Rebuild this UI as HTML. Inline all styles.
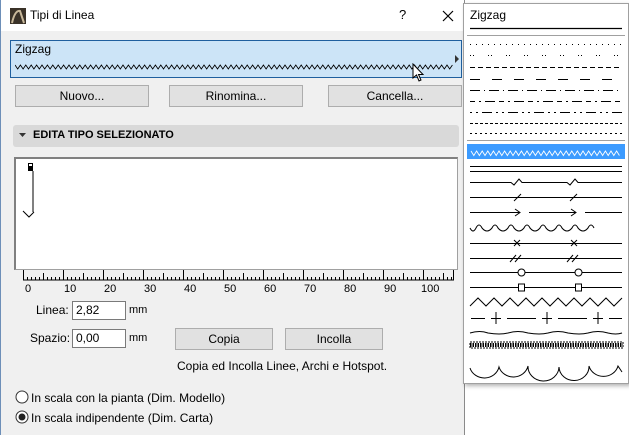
<!DOCTYPE html>
<html><head><meta charset="utf-8"><style>
body{margin:0;width:629px;height:435px;background:#fff;position:relative;overflow:hidden;font-family:"Liberation Sans",sans-serif;font-size:12px;color:#000}
.a{position:absolute}
.btn{position:absolute;background:#e1e1e1;border:1px solid #adadad;box-sizing:border-box;text-align:center;line-height:20px;font-size:12px}
.inp{position:absolute;background:#fff;border:1px solid #7a7a7a;box-sizing:border-box;padding-left:3px;line-height:16px}
</style></head><body>
<div class="a" style="left:0;top:0;width:465px;height:435px;background:#f0f0f0;border-left:1px solid #6d8fb8;border-right:1px solid #8a8a8a;box-sizing:border-box"></div>
<div class="a" style="left:1px;top:0;width:463px;height:31px;background:#fff"></div>
<svg class="a" style="left:10px;top:8px" width="16" height="16"><rect width="16" height="16" fill="#3a3228"/><path d="M2 15 Q5 2 10 3 L14 15" stroke="#c8b89a" stroke-width="2" fill="none"/></svg>
<div class="a" style="left:30px;top:8px;font-size:12px">Tipi di Linea</div>
<div class="a" style="left:399px;top:7px;font-size:13px">?</div>
<svg class="a" style="left:442px;top:10px" width="12" height="12"><path d="M1 1L11 11M11 1L1 11" stroke="#000" stroke-width="1.2"/></svg>
<div class="a" style="left:10px;top:40px;width:452px;height:38px;background:#cce4f7;border:1px solid #1f5f9e;box-sizing:border-box"></div>
<div class="a" style="left:15px;top:42px">Zigzag</div>
<svg class="a" style="left:15px;top:63px" width="440" height="8"><polyline id="zz1" fill="none" stroke="#000" stroke-width="0.9" points=""/></svg>
<svg class="a" style="left:455px;top:55px" width="5" height="8"><path d="M0 0L4 4L0 8Z" fill="#333"/></svg>
<svg class="a" style="left:412px;top:63px" width="14" height="20"><path d="M1 1L1 15L4.5 12L7 18L9 17L6.5 11.5L11 11.5Z" fill="#fff" stroke="#000" stroke-width="1"/></svg>
<div class="btn" style="left:15px;top:85px;width:134px;height:22px">Nuovo...</div>
<div class="btn" style="left:169px;top:85px;width:134px;height:22px">Rinomina...</div>
<div class="btn" style="left:328px;top:85px;width:134px;height:22px">Cancella...</div>
<div class="a" style="left:13px;top:125px;width:446px;height:22px;background:#d9d9d9;border-radius:3px"></div>
<svg class="a" style="left:19px;top:133px" width="8" height="5"><path d="M0 0H7L3.5 4Z" fill="#333"/></svg>
<div class="a" style="left:33px;top:129px;font-weight:bold;font-size:11px">EDITA TIPO SELEZIONATO</div>
<div class="a" style="left:14px;top:157px;width:444px;height:113px;background:#fff;border:1px solid #a0a0a0;border-top:2px solid #808080;border-left:2px solid #808080;box-sizing:border-box"></div>
<svg class="a" style="left:20px;top:160px" width="20" height="65"><rect x="8.5" y="3.5" width="4" height="3" fill="none" stroke="#000"/><rect x="8" y="7" width="5" height="4" fill="#000"/><line x1="13" y1="11" x2="13" y2="52" stroke="#000"/><path d="M3 51L9 57L14 52" stroke="#000" fill="none"/></svg>
<svg class="a" style="left:20px;top:267px" width="440" height="14">
<g stroke="#000" stroke-width="1">
<line x1="3" y1="13" x2="434" y2="13"/>
<path id="tk" d="M3.5 3V13M7.5 10V13M11.5 10V13M15.5 10V13M19.5 10V13M23.5 6V13M27.5 10V13M31.5 10V13M35.5 10V13M39.5 10V13"/>
<use href="#tk" x="40"/><use href="#tk" x="80"/><use href="#tk" x="120"/><use href="#tk" x="160"/><use href="#tk" x="200"/><use href="#tk" x="240"/><use href="#tk" x="280"/><use href="#tk" x="320"/><use href="#tk" x="360"/>
<path d="M403.5 3V13M407.5 10V13M411.5 10V13M415.5 10V13M419.5 10V13M423.5 6V13M427.5 10V13M431.5 10V13M433.5 3V13"/>
</g></svg>
<div class="a" style="top:283px;left:0;width:465px;font-size:11px">
<span class="a" style="left:25px">0</span><span class="a" style="left:64px">10</span><span class="a" style="left:104px">20</span><span class="a" style="left:144px">30</span><span class="a" style="left:184px">40</span><span class="a" style="left:224px">50</span><span class="a" style="left:264px">60</span><span class="a" style="left:304px">70</span><span class="a" style="left:344px">80</span><span class="a" style="left:384px">90</span><span class="a" style="left:421px">100</span></div>
<div class="a" style="left:36px;top:303px">Linea:</div>
<div class="inp" style="left:72px;top:301px;width:54px;height:19px">2,82</div>
<div class="a" style="left:129px;top:304px;font-size:11px">mm</div>
<div class="a" style="left:30px;top:331px">Spazio:</div>
<div class="inp" style="left:72px;top:329px;width:54px;height:19px">0,00</div>
<div class="a" style="left:129px;top:332px;font-size:11px">mm</div>
<div class="btn" style="left:175px;top:328px;width:98px;height:22px">Copia</div>
<div class="btn" style="left:285px;top:328px;width:98px;height:22px">Incolla</div>
<div class="a" style="left:177px;top:359px">Copia ed Incolla Linee, Archi e Hotspot.</div>
<svg class="a" style="left:15px;top:390px" width="14" height="34"><circle cx="7" cy="7" r="6" fill="#fff" stroke="#333"/><circle cx="7" cy="27" r="6" fill="#fff" stroke="#333"/><circle cx="7" cy="27" r="3.5" fill="#222"/></svg>
<div class="a" style="left:31px;top:391px">In scala con la pianta (Dim. Modello)</div>
<div class="a" style="left:31px;top:411px">In scala indipendente (Dim. Carta)</div>
<div class="a" style="left:463px;top:3px;width:166px;height:381px;background:#fff;border:1px solid #a0a0a0;box-sizing:border-box;box-shadow:2px 2px 4px rgba(0,0,0,.3)"></div>
<div class="a" style="left:470px;top:8px">Zigzag</div>
<svg class="a" style="left:463px;top:0" width="166" height="385">
<g stroke="#000" stroke-width="1" fill="none">
<line x1="7" y1="28.5" x2="159" y2="28.5" stroke-width="1.3"/>
<line x1="4" y1="35.5" x2="162" y2="35.5" stroke="#a0a0a0"/>
<line x1="7" y1="44.5" x2="159" y2="44.5" stroke-dasharray="1 5"/>
<line x1="7" y1="55.5" x2="159" y2="55.5" stroke-dasharray="1 2 1 14"/>
<line x1="7" y1="67.5" x2="159" y2="67.5" stroke-dasharray="5 3"/>
<line x1="7" y1="79.5" x2="159" y2="79.5" stroke-dasharray="10 12"/>
<line x1="7" y1="90.5" x2="159" y2="90.5" stroke-dasharray="10 4 1 4"/>
<line x1="7" y1="101.5" x2="159" y2="101.5" stroke-dasharray="5 4 2 4 10 4"/>
<line x1="7" y1="112.5" x2="159" y2="112.5" stroke-dasharray="2 4 2 4 10 4"/>
<line x1="7" y1="123.5" x2="159" y2="123.5" stroke-dasharray="3 2"/>
<line x1="7" y1="133.5" x2="159" y2="133.5" stroke-dasharray="2 3"/>
<line x1="4" y1="140.5" x2="162" y2="140.5" stroke="#a0a0a0"/>
</g>
<rect x="4" y="144" width="158" height="15" fill="#3c9bff"/>
<polyline id="zz2" fill="none" stroke="#fff" stroke-width="0.9" points=""/>
<g stroke="#000" stroke-width="1" fill="none">
<line x1="7" y1="166.5" x2="159" y2="166.5"/><line x1="7" y1="171.5" x2="159" y2="171.5"/>
<polyline points="7,182.5 48,182.5 51,185 56,179 59,182.5 104,182.5 107,185 112,179 115,182.5 159,182.5"/>
<line x1="7" y1="197.5" x2="159" y2="197.5"/><path d="M51 201L58 194M107 201L114 194"/>
<path d="M7 212.5H57M52 209L57 212.5L52 216M66 212.5H113M108 209L113 212.5L108 216M122 212.5H159"/>
<path d="M7 228 q3 6 6 0 q3 -6 6 0 M19 228 q5 6 10 0 q3 -6 6 0 q5 6 10 0 q3 -6 6 0 q5 6 10 0 q3 -6 6 0 q5 6 10 0 q3 -6 6 0 q5 6 10 0 q3 -6 6 0 q5 6 10 0 q3 -6 6 0 q5 6 10 0 q3 -6 6 0"/>
<line x1="7" y1="243.5" x2="159" y2="243.5"/><path d="M51 240l6 6M57 240l-6 6M108 240l6 6M114 240l-6 6"/>
<line x1="7" y1="258.5" x2="159" y2="258.5"/><path d="M47 262l6 -7M52 262l6 -7M104 262l6 -7M109 262l6 -7"/>
<path d="M7 272.5H55M62 272.5H112M119 272.5H159"/><circle cx="58.5" cy="272.5" r="3.5"/><circle cx="115.5" cy="272.5" r="3.5"/>
<path d="M7 287.5H55M62 287.5H112M119 287.5H159"/><rect x="55.5" y="284" width="6" height="7"/><rect x="112.5" y="284" width="6" height="7"/>
<polyline points="7,306 15,298 23,306 31,298 39,306 47,298 55,306 63,298 71,306 79,298 87,306 95,298 103,306 111,298 119,306 127,298 135,306 143,298 151,306 159,298"/>
<path d="M8 318.5H22M28 318.5H38M44 318.5H73M79 318.5H89M95 318.5H124M130 318.5H140M146 318.5H159M33 312V324M84 312V324M135 312V324"/>
<path d="M7 333 q10 -3 18 0 q12 2 20 0 q10 -3 20 0 q12 2 20 0 q10 -3 20 0 q12 2 20 0 q10 -3 20 0 q8 2 14 0"/>
<path d="M7 368 A15 14 0 0 0 36 367 A15 14 0 0 0 65 366 A15 14 0 0 0 96 367 A15 14 0 0 0 126 366 A15 14 0 0 0 155 366 L159 372"/>
</g>
<rect x="7" y="342" width="153" height="6" fill="none" stroke="#000" stroke-width="1" stroke-dasharray="2 1"/>
<line x1="7" y1="345" x2="160" y2="345" stroke="#000" stroke-width="4" stroke-dasharray="1.5 1"/>
</svg>
<script>
function zz(id,x0,x1,ya,yb,p){var s=[],i=0;for(var x=x0;x<=x1;x+=p/2,i++)s.push(x+","+(i%2?yb:ya));document.getElementById(id).setAttribute("points",s.join(" "));}
zz("zz1",0,438,2,6,5.4);
zz("zz2",8,158,151,155.5,5.6);
</script>
</body></html>
